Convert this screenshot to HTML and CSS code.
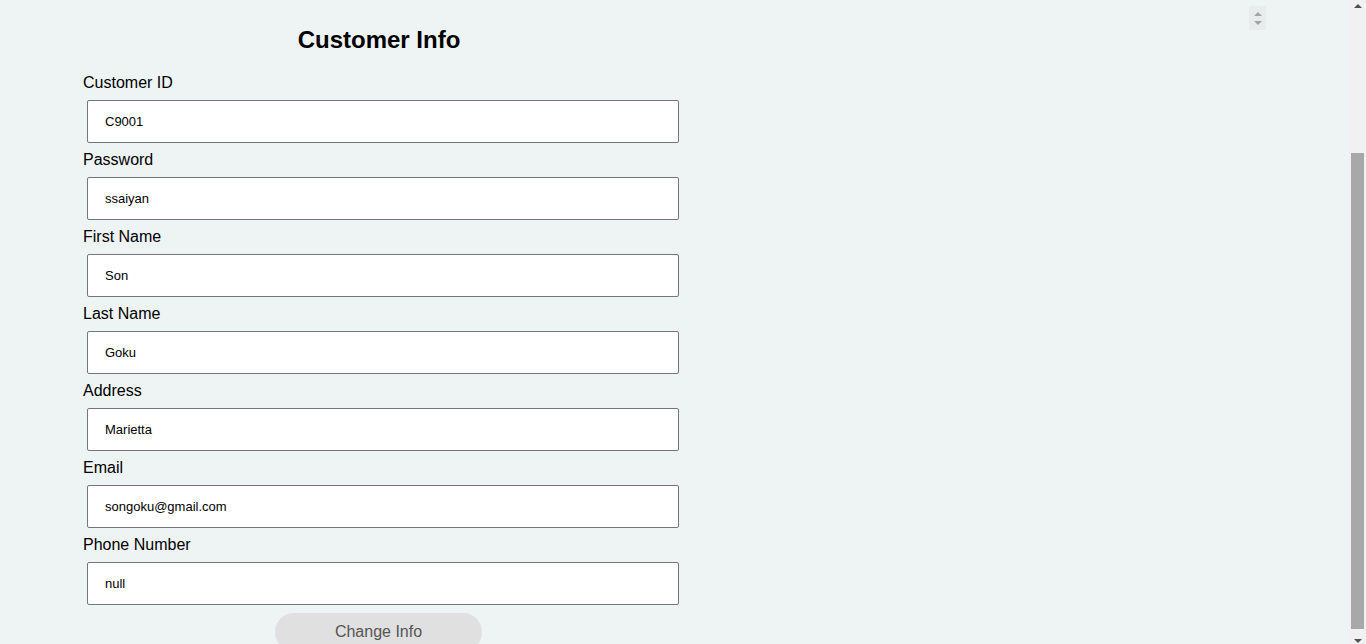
FILE: index.html
```html
<!DOCTYPE html>
<html lang="en">
<head>
<meta charset="utf-8">
<title>Customer Info</title>
<link rel="stylesheet" href="styles.css">
</head>
<body>
<div class="page">
  <div class="top-area"></div>
  <main class="main">
    <section class="form-panel">
      <h2 class="title">Customer Info</h2>
      <form class="form">
        <label class="field-label">Customer ID</label>
        <input class="field" type="text" value="C9001">
        <label class="field-label">Password</label>
        <input class="field" type="text" value="ssaiyan">
        <label class="field-label">First Name</label>
        <input class="field" type="text" value="Son">
        <label class="field-label">Last Name</label>
        <input class="field" type="text" value="Goku">
        <label class="field-label">Address</label>
        <input class="field" type="text" value="Marietta">
        <label class="field-label">Email</label>
        <input class="field" type="text" value="songoku@gmail.com">
        <label class="field-label">Phone Number</label>
        <input class="field" type="text" value="null">
        <button class="submit" type="button">Change Info</button>
      </form>
    </section>
    <aside class="side">
      <div class="spinner">
        <span class="tri up"></span>
        <span class="tri down"></span>
      </div>
    </aside>
  </main>
</div>
<div class="scrollbar" aria-hidden="true">
  <div class="sb-btn"><span class="sb-arrow up"></span></div>
  <div class="sb-track"><div class="sb-thumb"></div></div>
  <div class="sb-btn"><span class="sb-arrow down"></span></div>
</div>
<script src="script.js"></script>
</body>
</html>
```

FILE: styles.css
```css
html, body {
  margin: 0;
  padding: 0;
  background: #eef3f3;
}
body {
  font-family: "Liberation Sans", Arial, sans-serif;
  color: #000;
}
.page {
  height: 825px;
  overflow: hidden;
  display: flex;
  flex-direction: column;
}
.top-area {
  height: 181px;
  flex: none;
}
.main {
  flex: 1;
  display: flex;
  justify-content: space-between;
}
.form-panel {
  width: 592px;
  margin-left: 83px;
  padding-top: 26px;
}
.title {
  margin: 0;
  font-size: 24px;
  line-height: 27px;
  font-weight: bold;
  text-align: center;
}
.form {
  margin-top: 20px;
  display: flex;
  flex-direction: column;
}
.field-label {
  display: block;
  font-size: 16px;
  line-height: 20px;
  height: 18px;
}
.field {
  box-sizing: border-box;
  width: 592px;
  height: 43px;
  margin: 9px 0 7px 4px;
  padding: 0 17px;
  border: 1px solid #767676;
  border-radius: 2px;
  background: #fff;
  font-family: "Liberation Sans", Arial, sans-serif;
  font-size: 13px;
  color: #000;
  outline: none;
}
.submit {
  align-self: flex-start;
  width: 207px;
  height: 38px;
  margin: 1px 0 0 192px;
  border: none;
  border-radius: 20px;
  background: #e0e0e0;
  color: #555;
  font-family: "Liberation Sans", Arial, sans-serif;
  font-size: 16px;
}
.side {
  width: 17px;
  margin-right: 100px;
  padding-top: 6px;
}
.spinner {
  width: 17px;
  height: 24px;
  background: #e8ecec;
  display: flex;
  flex-direction: column;
  align-items: center;
  justify-content: center;
  gap: 5px;
}
.tri {
  width: 0;
  height: 0;
  border-left: 4px solid transparent;
  border-right: 4px solid transparent;
}
.tri.up {
  border-bottom: 4px solid #a3a3a3;
}
.tri.down {
  border-top: 4px solid #a3a3a3;
}

/* viewport scrollbar overlay */
.scrollbar {
  position: fixed;
  top: 0;
  right: 0;
  width: 17px;
  height: 100vh;
  background: #f1f1f1;
  display: flex;
  flex-direction: column;
}
.sb-btn {
  height: 17px;
  flex: none;
  display: flex;
  align-items: center;
  justify-content: center;
}
.sb-arrow {
  width: 0;
  height: 0;
  border-left: 4px solid transparent;
  border-right: 4px solid transparent;
}
.sb-arrow.up {
  border-bottom: 4px solid #505050;
  margin-top: -6px;
}
.sb-arrow.down {
  border-top: 4px solid #505050;
  margin-top: 6px;
}
.sb-track {
  flex: 1;
  padding: 136px 2px 0 2px;
}
.sb-thumb {
  height: 476px;
  background: #a8a8a8;
}
```

FILE: script.js
```js
window.scrollTo(0, document.documentElement.scrollHeight);
window.addEventListener('load', function () {
  window.scrollTo(0, document.documentElement.scrollHeight);
});
```
